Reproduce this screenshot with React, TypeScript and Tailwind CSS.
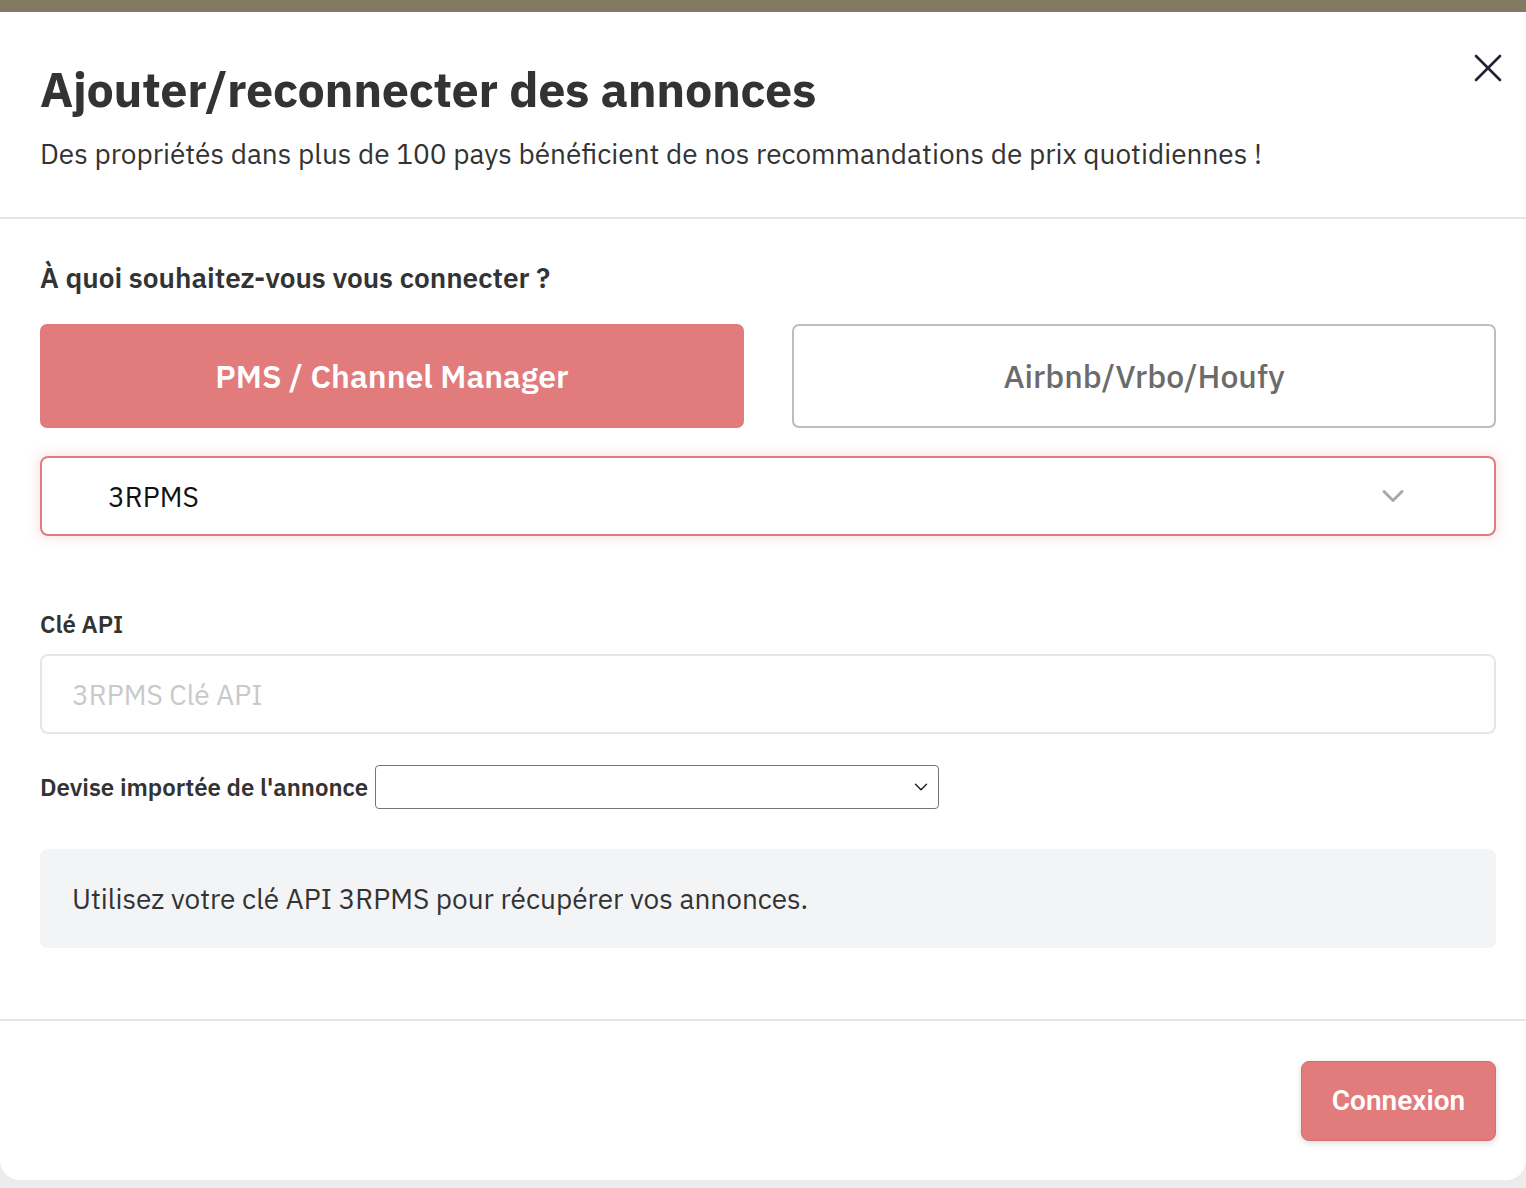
import { X, ChevronDown } from "lucide-react";

const font = { fontFamily: '"IBM Plex Sans", Roboto, "Noto Sans", sans-serif' };

export default function App() {
  return (
    <div className="min-h-[1188px] w-full bg-[#ececec] flex flex-col" style={font}>
      <div className="h-[12px] bg-[#837a62]" />
      <div className="relative bg-white rounded-b-[20px] h-[1168px] flex flex-col text-[#333]">
        {/* ── Header ── */}
        <button className="absolute right-[14px] top-[32px] text-[#1f2430]">
          <X size={48} strokeWidth={1.3} />
        </button>
        <header className="pl-10 pr-[30px] pt-[47px] h-[207px] border-b-2 border-[#e6e6e6]">
          <h1 className="text-[48.5px] font-bold leading-[60px] tracking-[-0.3px]">Ajouter/reconnecter des annonces</h1>
          <p className="mt-[17px] text-[28px] leading-[36px]">
            Des propriétés dans plus de 100 pays bénéficient de nos recommandations de prix quotidiennes !
          </p>
        </header>

        {/* ── Body ── */}
        <div className="pl-10 pr-[30px] pt-[42px] flex flex-col">
          <p className="text-[28px] font-semibold leading-[34px]">À quoi souhaitez-vous vous connecter ?</p>

          <div className="mt-[29px] grid grid-cols-2 gap-12">
            <button className="h-[104px] rounded-[7px] bg-[#e27b7b] text-white text-[32px] font-semibold">
              PMS / Channel Manager
            </button>
            <button className="h-[104px] rounded-[7px] border-2 border-[#bdbdbd] bg-white text-[#6b6b6b] text-[32px] font-medium">
              Airbnb/Vrbo/Houfy
            </button>
          </div>

          <div className="mt-[28px] h-[80px] rounded-[8px] border-2 border-[#e27b7b] shadow-[0_0_14px_rgba(226,123,123,0.28)] flex items-center justify-between pl-[66px] pr-[83px]">
            <span className="text-[28px] text-[#111] translate-y-[1px]">3RPMS</span>
            <ChevronDown size={36} strokeWidth={2} className="text-[#a9a9a9]" />
          </div>

          <label className="mt-[73px] text-[24px] font-semibold leading-[30px]">Clé API</label>
          <input
            placeholder="3RPMS Clé API"
            className="mt-[15px] h-[80px] rounded-[8px] border-2 border-[#e6e6e6] px-[30px] text-[28px] placeholder:text-[#c9c9c9] outline-none"
          />

          <div className="mt-[31px] flex items-center gap-[7px]">
            <span className="text-[24px] font-semibold">Devise importée de l'annonce</span>
            <div className="w-[564px] h-[44px] rounded-[4px] border border-[#767676] flex items-center justify-end pr-[6px]">
              <ChevronDown size={22} strokeWidth={1.6} className="text-[#222]" />
            </div>
          </div>

          <div className="mt-[40px] h-[99px] rounded-[8px] bg-[#f3f4f6] flex items-center px-[32px]">
            <span className="text-[28px] text-[#333]">Utilisez votre clé API 3RPMS pour récupérer vos annonces.</span>
          </div>
        </div>

        {/* ── Footer ── */}
        <div className="mt-[71px] border-t-2 border-[#e6e6e6] pr-[30px] pt-[40px] flex justify-end">
          <button
            className="w-[195px] h-[80px] rounded-[8px] bg-[#e27b7b] border border-[#cf6f6f] text-white text-[28px] font-semibold shadow-[0_2px_6px_rgba(0,0,0,0.15)]"
            style={{ fontFamily: "Roboto, sans-serif" }}
          >
            Connexion
          </button>
        </div>
      </div>
    </div>
  );
}
